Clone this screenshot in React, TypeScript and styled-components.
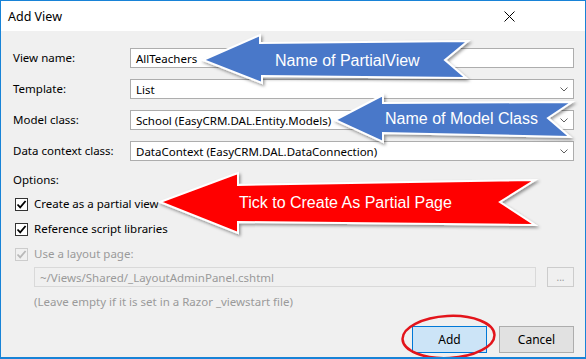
import React from 'react';
import styled, { createGlobalStyle } from 'styled-components';

const GlobalStyle = createGlobalStyle`
  html, body {
    margin: 0;
    padding: 0;
    background: #ffffff;
  }
  #root {
    width: 586px;
    height: 359px;
  }
`;

const Window = styled.div`
  position: relative;
  box-sizing: border-box;
  width: 586px;
  height: 359px;
  border: 1px solid #1883d7;
  border-bottom-width: 2px;
  background: #f0f0f0;
  display: flex;
  flex-direction: column;
  font-family: 'Noto Sans', 'Open Sans', sans-serif;
  font-size: 11.5px;
  color: #000;
  overflow: hidden;
`;

const TitleBar = styled.div`
  height: 30px;
  background: #ffffff;
  display: flex;
  align-items: center;
  justify-content: space-between;
  padding: 0 0 0 7px;
  font-size: 12.5px;
`;

const CloseButton = styled.div`
  width: 46px;
  height: 30px;
  display: flex;
  align-items: center;
  justify-content: center;
  margin-right: 53px;
`;

const Body = styled.div`
  flex: 1;
  display: flex;
  flex-direction: column;
  padding: 17px 11px 0 12px;
`;

const FieldGrid = styled.div`
  display: grid;
  grid-template-columns: 117px 1fr;
  row-gap: 11px;
  align-items: center;
`;

const Label = styled.div`
  line-height: 16px;
  white-space: nowrap;
`;

const TextBox = styled.div<{ $disabled?: boolean }>`
  box-sizing: border-box;
  height: 20px;
  border: 1px solid ${(p) => (p.$disabled ? '#d9d9d9' : '#adadad')};
  background: ${(p) => (p.$disabled ? '#f0f0f0' : '#ffffff')};
  color: ${(p) => (p.$disabled ? '#9a9a9a' : '#000')};
  display: flex;
  align-items: center;
  padding: 0 5px;
  white-space: nowrap;
  flex: 1;
`;

const Combo = styled(TextBox)`
  justify-content: space-between;
  padding-right: 5px;
`;

const OptionsLabel = styled.div`
  margin-top: 11px;
  line-height: 16px;
`;

const CheckRow = styled.div<{ $disabled?: boolean; $gap: number }>`
  display: flex;
  align-items: center;
  gap: 6px;
  margin-top: ${(p) => p.$gap}px;
  margin-left: 2px;
  line-height: 16px;
  color: ${(p) => (p.$disabled ? '#9a9a9a' : '#000')};
`;

const Box = styled.div<{ $disabled?: boolean }>`
  box-sizing: border-box;
  width: 13px;
  height: 13px;
  border: 1px solid ${(p) => (p.$disabled ? '#cccccc' : '#333333')};
  background: ${(p) => (p.$disabled ? '#f0f0f0' : '#ffffff')};
  display: flex;
  align-items: center;
  justify-content: center;
`;

const LayoutRow = styled.div`
  display: flex;
  gap: 11px;
  margin: 5px 0 0 21px;
`;

const BrowseButton = styled.div`
  box-sizing: border-box;
  width: 27px;
  height: 20px;
  border: 1px solid #cccccc;
  background: #f0f0f0;
  color: #9a9a9a;
  display: flex;
  align-items: flex-end;
  justify-content: center;
  padding-bottom: 4px;
  font-size: 10px;
  line-height: 10px;
`;

const Hint = styled.div`
  margin: 7px 0 0 21px;
  line-height: 16px;
  color: #9a9a9a;
`;

const Footer = styled.div`
  display: flex;
  justify-content: flex-end;
  gap: 12px;
  margin-top: 16px;
`;

const DialogButton = styled.div<{ $primary?: boolean }>`
  box-sizing: border-box;
  width: 75px;
  height: 27px;
  border: 1px solid ${(p) => (p.$primary ? '#0078d7' : '#adadad')};
  background: ${(p) => (p.$primary ? '#cce4f7' : '#e1e1e1')};
  display: flex;
  align-items: center;
  justify-content: center;
  font-size: 12px;
`;

const Overlay = styled.svg`
  position: absolute;
  left: -1px;
  top: -1px;
  pointer-events: none;
`;

const Chevron = () => (
  <svg width="8" height="5" viewBox="0 0 8 5">
    <path d="M0.5 0.5 L4 4 L7.5 0.5" fill="none" stroke="#606060" strokeWidth="1" />
  </svg>
);

const Check = ({ disabled }: { disabled?: boolean }) => (
  <svg width="11" height="11" viewBox="0 0 11 11">
    <path
      d="M1.5 5.5 L4.2 8.3 L9.6 2"
      fill="none"
      stroke={disabled ? '#b8b8b8' : '#000'}
      strokeWidth="1.8"
    />
  </svg>
);

type Arrow = {
  points: string;
  fill: string;
  text: string;
  x: number;
  y: number;
};

const arrows: Arrow[] = [
  {
    points: '203,60 260,35 260,43 468,41 445,60 466,78 262,76 262,83',
    fill: '#4a78c9',
    text: 'Name of PartialView',
    x: 275,
    y: 66,
  },
  {
    points: '335,120 383,95 383,103 572,102 548,118 570,137 383,133 383,142',
    fill: '#4a78c9',
    text: 'Name of Model Class',
    x: 385,
    y: 124,
  },
  {
    points: '160,202 238,173 238,185 535,180 500,202 535,225 238,222 238,233',
    fill: '#ff0000',
    text: 'Tick to Create As Partial Page',
    x: 239,
    y: 208,
  },
];

const fields = [
  { label: 'View name:', value: 'AllTeachers', combo: false },
  { label: 'Template:', value: 'List', combo: true },
  { label: 'Model class:', value: 'School (EasyCRM.DAL.Entity.Models)', combo: true },
  { label: 'Data context class:', value: 'DataContext (EasyCRM.DAL.DataConnection)', combo: true },
];

const App = () => {
  return (
    <>
      <GlobalStyle />
      <Window>
        <TitleBar>
          <span>Add View</span>
          <CloseButton>
            <svg width="11" height="11" viewBox="0 0 11 11">
              <path d="M0.5 0.5 L10.5 10.5 M10.5 0.5 L0.5 10.5" stroke="#000" strokeWidth="1" />
            </svg>
          </CloseButton>
        </TitleBar>
        <Body>
          <FieldGrid>
            {fields.map((f) => (
              <React.Fragment key={f.label}>
                <Label>{f.label}</Label>
                {f.combo ? (
                  <Combo>
                    <span>{f.value}</span>
                    <Chevron />
                  </Combo>
                ) : (
                  <TextBox>{f.value}</TextBox>
                )}
              </React.Fragment>
            ))}
          </FieldGrid>
          <OptionsLabel>Options:</OptionsLabel>
          <CheckRow $gap={8}>
            <Box>
              <Check />
            </Box>
            Create as a partial view
          </CheckRow>
          <CheckRow $gap={9}>
            <Box>
              <Check />
            </Box>
            Reference script libraries
          </CheckRow>
          <CheckRow $gap={9} $disabled>
            <Box $disabled>
              <Check disabled />
            </Box>
            Use a layout page:
          </CheckRow>
          <LayoutRow>
            <TextBox $disabled>~/Views/Shared/_LayoutAdminPanel.cshtml</TextBox>
            <BrowseButton>...</BrowseButton>
          </LayoutRow>
          <Hint>(Leave empty if it is set in a Razor _viewstart file)</Hint>
          <Footer>
            <DialogButton $primary>Add</DialogButton>
            <DialogButton>Cancel</DialogButton>
          </Footer>
        </Body>
        <Overlay width="586" height="359" viewBox="0 0 586 359">
          <defs>
            <filter id="shadow" x="-10%" y="-30%" width="120%" height="160%">
              <feDropShadow dx="1.5" dy="2" stdDeviation="1.5" floodColor="#000" floodOpacity="0.4" />
            </filter>
          </defs>
          {arrows.map((a) => (
            <g key={a.text}>
              <polygon
                points={a.points}
                fill={a.fill}
                stroke="#ffffff"
                strokeWidth="2"
                strokeLinejoin="miter"
                filter="url(#shadow)"
              />
              <text
                x={a.x}
                y={a.y}
                fill="#ffffff"
                fontFamily="'Liberation Sans', Arial, sans-serif"
                fontSize="16"
              >
                {a.text}
              </text>
            </g>
          ))}
          <ellipse
            cx="448.5"
            cy="337"
            rx="46"
            ry="21"
            fill="none"
            stroke="#e3141b"
            strokeWidth="2.5"
            transform="rotate(-3 448.5 337)"
          />
        </Overlay>
      </Window>
    </>
  );
};

export default App;
